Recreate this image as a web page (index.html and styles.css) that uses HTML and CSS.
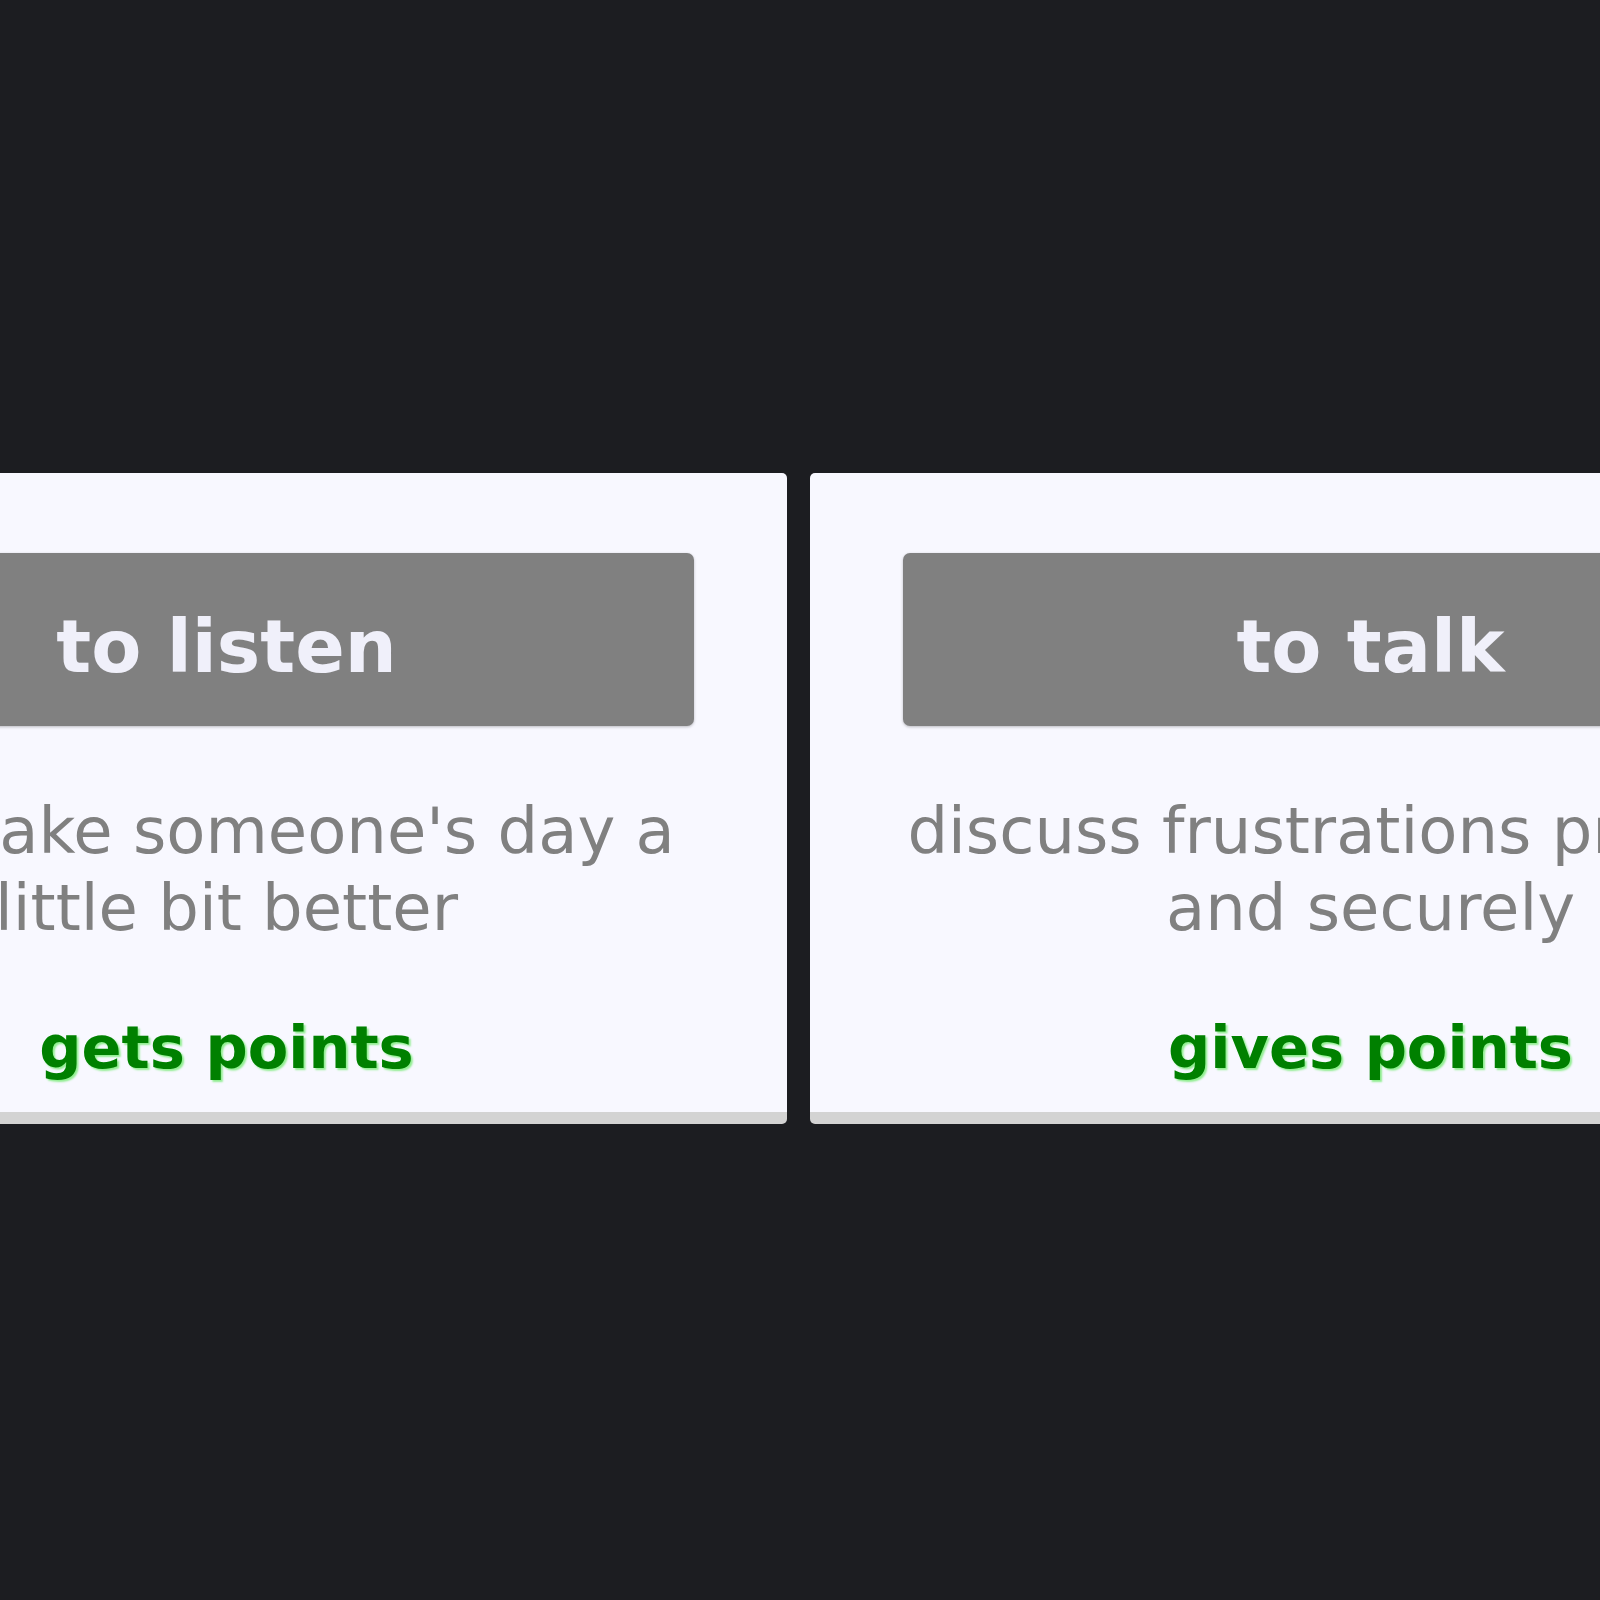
FILE: index.html
```html
<!DOCTYPE html>
<html lang="en">
<head>
  <meta charset="UTF-8">
  <title>Choose</title>
  <link rel="stylesheet" href="styles.css">
</head>
<body>
  <div class="page">
    <div class="cards">
      <!-- listener -->
      <div class="card">
        <div class="card-btn">to listen</div>
        <p class="card-text">help make someone's day a little bit better</p>
        <p class="card-points">gets points</p>
      </div>
      <!-- talker -->
      <div class="card">
        <div class="card-btn">to talk</div>
        <p class="card-text">discuss frustrations privately and securely</p>
        <p class="card-points">gives points</p>
      </div>
    </div>
  </div>
</body>
</html>
```
FILE: styles.css
```css
* {
  margin: 0;
  padding: 0;
  box-sizing: border-box;
}
body {
  font-family: "DejaVu Sans", Verdana, sans-serif;
  background-color: #1c1d21;
  overflow: hidden;
}
.page {
  padding-top: 473px;
}
.cards {
  display: flex;
  gap: 23px;
  width: max-content;
  margin-left: -334px;
}
.card {
  width: 1121px;
  background: #f8f8ff;
  padding: 80px 93px 30px;
  border-bottom: 12px solid #d3d3d3;
  border-radius: 5px;
  text-align: center;
}
.card-btn {
  height: 173px;
  padding-top: 13px;
  display: flex;
  align-items: center;
  justify-content: center;
  background: #808080;
  color: #f0f0fa;
  font-size: 73px;
  font-weight: bold;
  border-radius: 7px;
  box-shadow: 0 1px 3px rgba(0,0,0,0.25);
}
.card-text {
  margin-top: 67px;
  font-size: 64px;
  line-height: 77px;
  color: #808080;
}
.card-points {
  margin-top: 66px;
  font-size: 59px;
  font-weight: bold;
  color: #008000;
  text-shadow: 2px 2px 2px #90ee90;
}
```
